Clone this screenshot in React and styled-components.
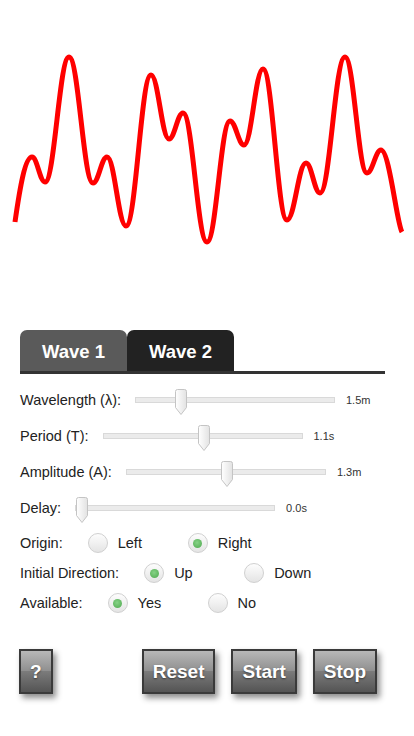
import styled, { createGlobalStyle } from 'styled-components';

const GlobalStyle = createGlobalStyle`
  body {
    margin: 0;
    background: #fff;
    font-family: "Liberation Sans", Arial, sans-serif;
    color: #222;
  }
`;

const Page = styled.div`
  width: 414px;
  height: 736px;
  overflow: hidden;
`;

const Canvas = styled.svg`
  display: block;
  width: 414px;
  height: 330px;
`;

const Panel = styled.div`
  padding: 0 29px 0 20px;
`;

const TabBar = styled.div`
  display: flex;
  border-bottom: 3px solid #333;
`;

const Tab = styled.div`
  width: 107px;
  height: 41px;
  display: flex;
  align-items: center;
  justify-content: center;
  border-radius: 7px 7px 0 0;
  background: ${(p) => (p.$active ? '#222' : '#5a5a5a')};
  color: #fff;
  font-size: 18.5px;
  font-weight: bold;
  padding-top: 2px;
  box-sizing: border-box;
`;

const Sliders = styled.div`
  margin-top: 8px;
`;

const SliderRow = styled.div`
  display: flex;
  align-items: center;
  height: 36px;
  font-size: 14.5px;
`;

const Label = styled.span`
  margin-right: ${(p) => p.$gap || 14}px;
`;

const Track = styled.div`
  position: relative;
  width: 200px;
  height: 6px;
  box-sizing: border-box;
  background: #ebebeb;
  border: 1px solid #d9d9d9;
`;

const Thumb = styled.svg`
  position: absolute;
  top: -9px;
  width: 12px;
  height: 27px;
`;

const Value = styled.span`
  margin-left: 11px;
  font-size: 11px;
  color: #333;
`;

const Radios = styled.div`
  margin-top: 2px;
`;

const RadioRow = styled.div`
  display: flex;
  align-items: center;
  height: 30px;
  font-size: 14.5px;
`;

const Option = styled.label`
  width: 100px;
  display: flex;
  align-items: center;
  gap: 10px;
`;

const RadioCircle = styled.span`
  width: 20px;
  height: 20px;
  box-sizing: border-box;
  border-radius: 50%;
  border: 1px solid #d0d0d0;
  background: linear-gradient(#fdfdfd, #e4e4e4);
  display: flex;
  align-items: center;
  justify-content: center;

  &::after {
    content: '';
    display: ${(p) => (p.$checked ? 'block' : 'none')};
    width: 9px;
    height: 9px;
    border-radius: 50%;
    background: radial-gradient(circle at 45% 40%, #86d286, #4ea94e);
  }
`;

const ButtonRow = styled.div`
  display: flex;
  gap: 16px;
  margin-top: 31px;
  padding: 0 37px 0 19px;
`;

const Button = styled.button`
  height: 45px;
  padding: 0 9px;
  min-width: 33px;
  margin-left: ${(p) => (p.$push ? 'auto' : '0')};
  border: 2px solid #3a3a3a;
  border-radius: 0;
  background: linear-gradient(#b8b8b8 0%, #8e8e8e 50%, #7b7b7b 50%, #545454 100%);
  box-shadow: 3px 4px 6px rgba(0, 0, 0, 0.45);
  color: #fff;
  font-family: "Liberation Sans", Arial, sans-serif;
  font-weight: bold;
  font-size: 19px;
  text-shadow: 0 1px 2px rgba(0, 0, 0, 0.5);
  cursor: pointer;
`;

const wavePoints = [
  [15, 222], [32, 157], [45, 182], [69, 57], [93, 183], [107, 157], [126, 226],
  [151, 75], [169, 139], [183, 113], [207, 242], [230, 121], [244, 145], [263, 69],
  [287, 220], [306, 163], [320, 193], [345, 57], [367, 173], [381, 150], [402, 232],
];

const buildWave = (pts) => {
  let d = `M${pts[0][0]} ${pts[0][1]}`;
  for (let i = 1; i < pts.length; i++) {
    const [x0, y0] = pts[i - 1];
    const [x1, y1] = pts[i];
    const dx = x1 - x0;
    let c1 = [x0 + dx * 0.4, y0];
    let c2 = [x1 - dx * 0.4, y1];
    if (i === 1) c1 = [x0 + dx * 0.3, y0 + (y1 - y0) * 0.55];
    if (i === pts.length - 1) c2 = [x1 - dx * 0.25, y1 - 8];
    d += ` C${c1[0].toFixed(1)} ${c1[1].toFixed(1)} ${c2[0].toFixed(1)} ${c2[1].toFixed(1)} ${x1} ${y1}`;
  }
  return d;
};

const sliders = [
  { label: 'Wavelength (λ):', pct: 0.21, value: '1.5m' },
  { label: 'Period (T):', pct: 0.5, value: '1.1s' },
  { label: 'Amplitude (A):', pct: 0.5, value: '1.3m' },
  { label: 'Delay:', pct: 0, value: '0.0s' },
];

const radios = [
  { label: 'Origin:', options: ['Left', 'Right'], checked: 1 },
  { label: 'Initial Direction:', options: ['Up', 'Down'], checked: 0 },
  { label: 'Available:', options: ['Yes', 'No'], checked: 0 },
];

const SliderThumb = ({ pct }) => (
  <Thumb viewBox="0 0 12 27" style={{ left: `${pct * 188}px` }}>
    <defs>
      <linearGradient id="thumbFill" x1="0" y1="0" x2="1" y2="0">
        <stop offset="0" stopColor="#ffffff" />
        <stop offset="1" stopColor="#e2e2e2" />
      </linearGradient>
    </defs>
    <path
      d="M2.5 0.5 h7 a2 2 0 0 1 2 2 v16 l-5.5 7 l-5.5 -7 v-16 a2 2 0 0 1 2 -2 z"
      fill="url(#thumbFill)"
      stroke="#c4c4c4"
    />
  </Thumb>
);

const App = () => (
  <Page>
    <GlobalStyle />
    <Canvas viewBox="0 0 414 330">
      <path
        d={buildWave(wavePoints)}
        fill="none"
        stroke="#ff0000"
        strokeWidth="5"
        strokeLinejoin="round"
      />
    </Canvas>
    <Panel>
      <TabBar>
        <Tab>Wave 1</Tab>
        <Tab $active>Wave 2</Tab>
      </TabBar>
      <Sliders>
        {sliders.map((s) => (
          <SliderRow key={s.label}>
            <Label>{s.label}</Label>
            <Track>
              <SliderThumb pct={s.pct} />
            </Track>
            <Value>{s.value}</Value>
          </SliderRow>
        ))}
      </Sliders>
      <Radios>
        {radios.map((r) => (
          <RadioRow key={r.label}>
            <Label $gap={25}>{r.label}</Label>
            {r.options.map((o, i) => (
              <Option key={o}>
                <RadioCircle $checked={i === r.checked} />
                {o}
              </Option>
            ))}
          </RadioRow>
        ))}
      </Radios>
    </Panel>
    <ButtonRow>
      <Button>?</Button>
      <Button $push>Reset</Button>
      <Button>Start</Button>
      <Button>Stop</Button>
    </ButtonRow>
  </Page>
);

export default App;
